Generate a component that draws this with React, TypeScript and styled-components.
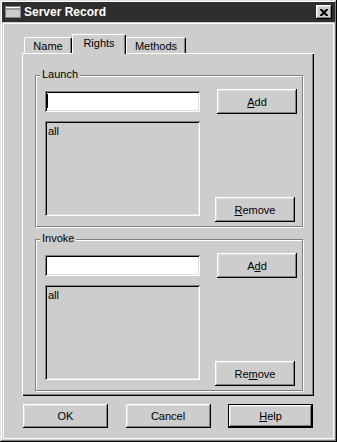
import React from 'react';
import styled, { createGlobalStyle } from 'styled-components';

const GlobalStyle = createGlobalStyle`
html, body {
  margin: 0;
  padding: 0;
  background: #cdcdcd;
}
body {
  font-family: "Liberation Sans", Arial, sans-serif;
  font-size: 11px;
  color: #000;
}
`

const Window = styled.div`
box-sizing: border-box;
width: 337px;
height: 442px;
padding: 2px;
background: #cdcdcd;
display: flex;
flex-direction: column;
box-shadow: inset -1px -1px #000, inset 1px 1px #dfdfdf, inset -2px -2px #808080, inset 2px 2px #fff;
`

const TitleBar = styled.div`
height: 20px;
flex: none;
background: #2e2e2e;
display: flex;
align-items: center;
padding: 0 3px 0 3px;
`

const TitleIcon = styled.svg`
width: 16px;
height: 12px;
margin-right: 3px;
flex: none;
`

const TitleText = styled.div`
flex: 1;
color: #fff;
font-weight: bold;
font-size: 12px;
`

const CloseButton = styled.div`
width: 16px;
height: 14px;
box-sizing: border-box;
background: #cdcdcd;
display: flex;
align-items: center;
justify-content: center;
box-shadow: inset -1px -1px #000, inset 1px 1px #fff, inset -2px -2px #808080, inset 2px 2px #dfdfdf;
`

const Client = styled.div`
flex: 1;
margin: 1px 1px 1px 1px;
border: 1px solid #fff;
padding: 10px 0 0 18px;
`

const TabRow = styled.div`
display: flex;
align-items: flex-end;
height: 19px;
padding-left: 2px;
`

const Tab = styled.div<{ $active?: boolean; $w: number }>`
box-sizing: border-box;
width: ${p => p.$w}px;
height: ${p => (p.$active ? 20 : 16)}px;
margin-bottom: ${p => (p.$active ? -1 : 0)}px;
padding-bottom: ${p => (p.$active ? 3 : 0)}px;
position: relative;
z-index: ${p => (p.$active ? 1 : 0)};
background: #cdcdcd;
border-top: 1px solid #fff;
border-left: 1px solid #fff;
border-right: 1px solid #000;
border-radius: 2px 2px 0 0;
box-shadow: inset -1px 0 #808080;
display: flex;
align-items: center;
justify-content: center;
`

const Panel = styled.div`
box-sizing: border-box;
width: 292px;
height: 343px;
padding: 22px 0 0 13px;
box-shadow: inset 1px 1px #fff, inset -1px -1px #000, inset -2px -2px #808080;
`

const Group = styled.div<{ $first?: boolean }>`
position: relative;
box-sizing: border-box;
width: 268px;
margin-top: ${p => (p.$first ? 0 : 12)}px;
padding: 15px 0 10px 9px;
border: 1px solid #808080;
box-shadow: inset 1px 1px #fff, 1px 1px #fff;
display: flex;
gap: 17px;
`

const GroupLabel = styled.div`
position: absolute;
top: -8px;
left: 4px;
padding: 0 2px;
line-height: 13px;
background: #cdcdcd;
`

const LeftCol = styled.div`
width: 155px;
display: flex;
flex-direction: column;
gap: 9px;
`

const RightCol = styled.div`
width: 80px;
display: flex;
flex-direction: column;
justify-content: space-between;
margin: -2px 0 -6px;
`

const Field = styled.div`
box-sizing: border-box;
height: 21px;
background: #fff;
padding: 3px 0 0 2px;
box-shadow: inset 1px 1px #808080, inset -1px -1px #fff, inset 2px 2px #000, inset -2px -2px #dfdfdf;
`

const Caret = styled.div`
width: 1px;
height: 14px;
background: #000;
`

const ListBox = styled.div`
box-sizing: border-box;
height: 95px;
padding: 4px 3px;
line-height: 13px;
background: #cdcdcd;
box-shadow: inset 1px 1px #808080, inset -1px -1px #fff, inset 2px 2px #000, inset -2px -2px #dfdfdf;
`

const Button = styled.div<{ $w?: number; $h?: number; $nudge?: number; $default?: boolean }>`
box-sizing: border-box;
width: ${p => p.$w ?? 80}px;
height: ${p => p.$h ?? 25}px;
margin-left: ${p => p.$nudge ?? 0}px;
display: flex;
align-items: center;
justify-content: center;
background: #cdcdcd;
border: ${p => (p.$default ? '1px solid #000' : 'none')};
box-shadow: inset -1px -1px #000, inset 1px 1px #fff, inset -2px -2px #808080, inset 2px 2px #dfdfdf;
`

const Key = styled.span`
text-decoration: underline;
text-underline-offset: 1px;
`

const ButtonRow = styled.div`
display: flex;
gap: 17.5px;
margin: 8px 0 0 1px;
`

const Hot = ({ text, at }: { text: string; at?: number }) =>
  at === undefined ? (
    <>{text}</>
  ) : (
    <>
      {text.slice(0, at)}
      <Key>{text[at]}</Key>
      {text.slice(at + 1)}
    </>
  )

const groups = [
  { label: 'Launch', addKey: 0, removeKey: 0, focused: true },
  { label: 'Invoke', addKey: 1, removeKey: 2, focused: false },
]

const tabs = [
  { name: 'Name', w: 48 },
  { name: 'Rights', w: 54, active: true },
  { name: 'Methods', w: 60 },
]

const App = () => {
  return (
    <>
      <GlobalStyle />
      <Window>
        <TitleBar>
          <TitleIcon viewBox="0 0 16 12">
            <rect x="0.5" y="0.5" width="15" height="11" fill="#cdcdcd" stroke="#808080" />
            <rect x="1" y="1" width="14" height="3" fill="#9a9a9a" />
            <line x1="1" y1="1.5" x2="15" y2="1.5" stroke="#fff" />
          </TitleIcon>
          <TitleText>Server Record</TitleText>
          <CloseButton>
            <svg width="8" height="7" viewBox="0 0 8 7">
              <path d="M0 0h2l2 2 2-2h2v1l-2.5 2.5L8 6v1H6L4 5 2 7H0V6l2.5-2.5L0 1z" fill="#000" />
            </svg>
          </CloseButton>
        </TitleBar>
        <Client>
          <TabRow>
            {tabs.map(t => (
              <Tab key={t.name} $w={t.w} $active={t.active}>{t.name}</Tab>
            ))}
          </TabRow>
          <Panel>
            {groups.map((g, i) => (
              <Group key={g.label} $first={i === 0}>
                <GroupLabel>{g.label}</GroupLabel>
                <LeftCol>
                  <Field>{g.focused && <Caret />}</Field>
                  <ListBox>all</ListBox>
                </LeftCol>
                <RightCol>
                  <Button><Hot text="Add" at={g.addKey} /></Button>
                  <Button $nudge={-2}><Hot text="Remove" at={g.removeKey} /></Button>
                </RightCol>
              </Group>
            ))}
          </Panel>
          <ButtonRow>
            <Button $w={85} $h={24}>OK</Button>
            <Button $w={85} $h={24}>Cancel</Button>
            <Button $w={85} $h={24} $default><Hot text="Help" at={0} /></Button>
          </ButtonRow>
        </Client>
      </Window>
    </>
  )
}

export default App;
